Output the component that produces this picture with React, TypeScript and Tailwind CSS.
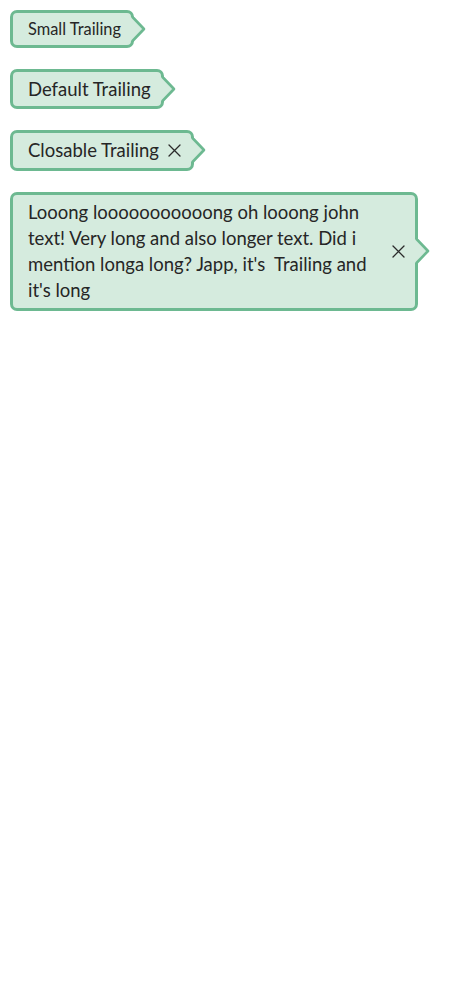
type TagProps = {
  size?: 'small' | 'default';
  closable?: boolean;
  children: React.ReactNode;
};

function CloseIcon() {
  return (
    <svg width="13" height="13" viewBox="0 0 13 13" className="shrink-0">
      <path d="M1 1 L12 12 M12 1 L1 12" stroke="#2b2b2b" strokeWidth="1.3" strokeLinecap="round" />
    </svg>
  );
}

function Arrow() {
  return (
    <svg
      width="17"
      height="28"
      viewBox="0 0 17 28"
      className="absolute left-full top-1/2 -ml-[3px] -translate-y-1/2"
    >
      <rect x="0" y="2" width="3" height="24" fill="#d5ebde" />
      <path d="M1.5 1.5 L1.5 2 L13 14 L1.5 26 L1.5 26.5 Z" fill="#d5ebde" />
      <path d="M1.5 1 L1.5 2 L13 14 L1.5 26 L1.5 27" fill="none" stroke="#6db991" strokeWidth="2.6" strokeLinejoin="round" />
    </svg>
  );
}

function Tag({ size = 'default', closable, children }: TagProps) {
  const small = size === 'small';
  return (
    <div className="relative inline-flex max-w-[408px] self-start">
      <div
        className={
          small
            ? 'flex items-center rounded-[7px] border-[3px] border-[#6db991] bg-[#d5ebde] py-[4px] pl-[15px] pr-[10px] text-[16.4px] leading-[24px] text-[#262626]'
            : 'flex items-center gap-[9px] rounded-[7px] border-[3px] border-[#6db991] bg-[#d5ebde] py-[4px] pl-[15px] pr-[10px] text-[18.5px] leading-[26.3px] text-[#262626]'
        }
      >
        <span>{children}</span>
        {closable && <CloseIcon />}
      </div>
      <Arrow />
    </div>
  );
}

export default function App() {
  return (
    <div className="flex flex-col gap-[21px] p-[10px]" style={{ fontFamily: 'Lato, "Noto Sans", sans-serif' }}>
      <Tag size="small">Small Trailing</Tag>
      <Tag>Default Trailing</Tag>
      <Tag closable>Closable Trailing</Tag>
      <Tag closable>
        <span className="block w-[355px] pr-[10px]">
          Looong looooooooooong oh looong john text! Very long and also longer text. Did i mention longa long? Japp, it's{'\u00a0'} Trailing and it's long
        </span>
      </Tag>
    </div>
  );
}
